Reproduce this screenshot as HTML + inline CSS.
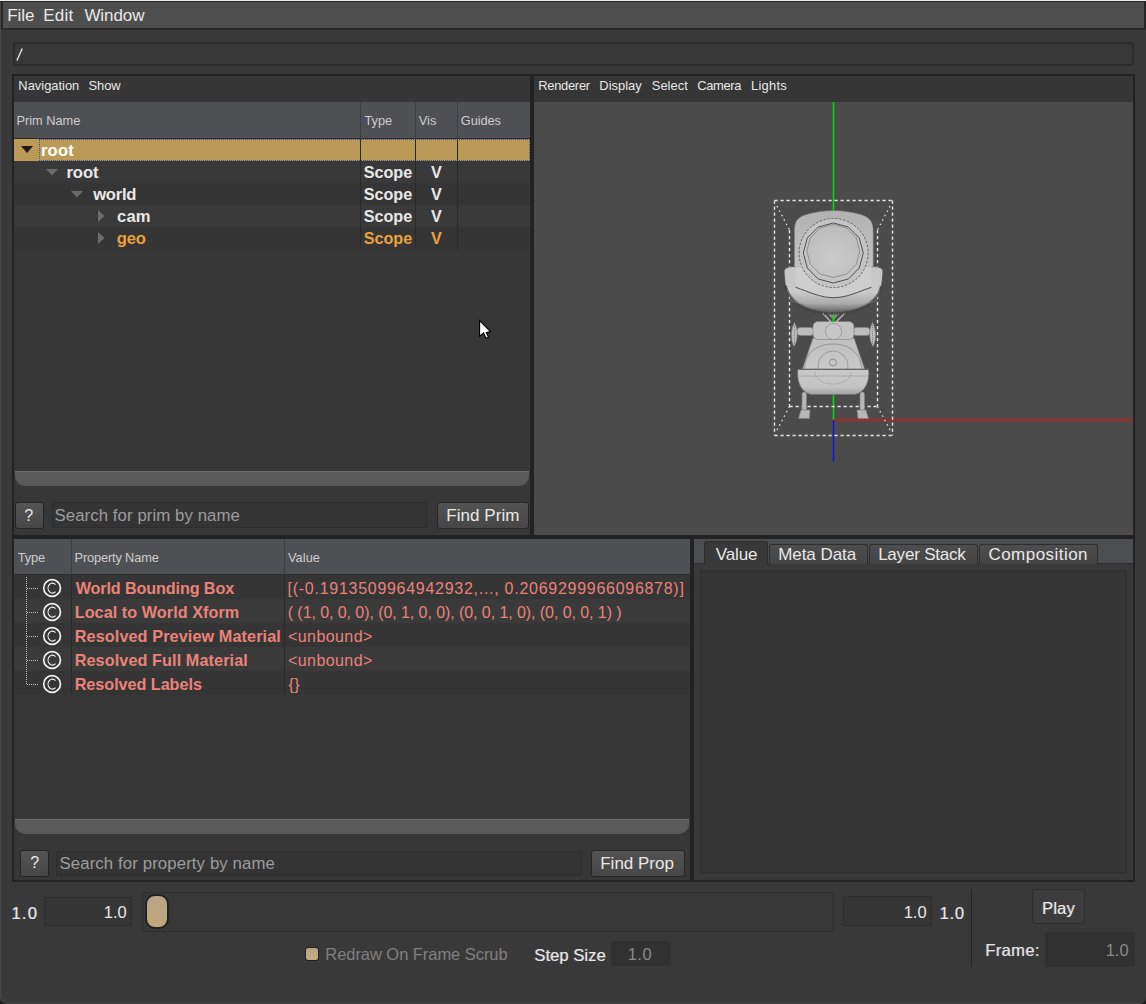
<!DOCTYPE html>
<html><head><meta charset="utf-8">
<style>
*{margin:0;padding:0;box-sizing:border-box}
html,body{width:1146px;height:1004px;overflow:hidden;background:#1e1e1e}
body{position:relative;font-family:"Liberation Sans",sans-serif;color:#e6e6e6}
.a{position:absolute}
.t{position:absolute;white-space:nowrap;line-height:1}
</style></head><body>
<!-- window bg with rounded bottom corners -->
<div class="a" style="left:0;top:0;width:1146px;height:1004px;background:#393939;border-radius:0 0 7px 7px;border-left:1px solid #474747;border-bottom:1px solid #444"></div>
<!-- window frame -->
<div class="a" style="left:0;top:0;width:1146px;height:1px;background:#ebebeb"></div>
<div class="a" style="left:0;top:1px;width:1146px;height:1px;background:#262626"></div>
<div class="a" style="left:1px;top:1px;width:2px;height:28px;background:#262626"></div>
<div class="a" style="left:1144px;top:1px;width:2px;height:28px;background:#262626"></div>
<!-- menubar -->
<div class="a" style="left:3px;top:2px;width:1141px;height:26px;background:#4e4e4e"></div>
<div class="a" style="left:1px;top:28px;width:1145px;height:2px;background:#2a2a2a"></div>

<!-- path field -->
<div class="a" style="left:13px;top:42px;width:1121px;height:24px;background:#383838;border:2px solid #2d2d2d;border-radius:3px"></div>

<svg class="a" style="left:0;top:0" width="40" height="70"><line x1="16.9" y1="60.6" x2="22.3" y2="48.4" stroke="#e6e6e6" stroke-width="1.35"/></svg>
<!-- LEFT PANEL frame -->
<div class="a" style="left:12px;top:74px;width:522px;height:465px;background:#222"></div>
<div class="a" style="left:14px;top:76px;width:516px;height:459px;background:#373737"></div>
<div class="a" style="left:14px;top:76px;width:516px;height:26px;background:#363636"></div>
<!-- tree header -->
<div class="a" style="left:14px;top:102px;width:516px;height:37px;background:#4f5054"></div>
<div class="a" style="left:14px;top:138px;width:516px;height:1px;background:#2c2c2c"></div>
<div class="a" style="left:360px;top:102px;width:1px;height:37px;background:#3d3e41"></div>
<div class="a" style="left:415px;top:102px;width:1px;height:37px;background:#3d3e41"></div>
<div class="a" style="left:457px;top:102px;width:1px;height:37px;background:#3d3e41"></div>
<!-- tree body -->
<div class="a" style="left:14px;top:139px;width:516px;height:332px;background:#373737"></div>
<div class="a" style="left:14px;top:139px;width:516px;height:22px;background:#bb9a57"></div>
<div class="a" style="left:39px;top:139px;width:491px;height:22px;border:1px dotted #3a55a0"></div>
<div class="a" style="left:14px;top:161px;width:516px;height:22px;background:#393939"></div>
<div class="a" style="left:14px;top:183px;width:516px;height:22px;background:#353535"></div>
<div class="a" style="left:14px;top:205px;width:516px;height:22px;background:#3a3a3a"></div>
<div class="a" style="left:14px;top:227px;width:516px;height:22px;background:#353535"></div>
<div class="a" style="left:360px;top:139px;width:1px;height:110px;background:#2a2a2a"></div>
<div class="a" style="left:415px;top:139px;width:1px;height:110px;background:#2a2a2a"></div>
<div class="a" style="left:457px;top:139px;width:1px;height:110px;background:#2a2a2a"></div>
<svg class="a" style="left:0;top:0" width="200" height="260">
 <polygon points="21,146 33,146 27,153" fill="#1c1c1c"/>
 <polygon points="46,169 58,169 52,175.5" fill="#6b6b6b"/>
 <polygon points="71,191 83,191 77,197.5" fill="#6b6b6b"/>
 <polygon points="98,210 104.5,216 98,222" fill="#6b6b6b"/>
 <polygon points="98,232 104.5,238 98,244" fill="#6b6b6b"/>
</svg>
<!-- tree scrollbar -->
<div class="a" style="left:15px;top:471px;width:514px;height:15px;background:#5a5a5a;border-top:1px solid #6e6e6e;border-radius:0 0 10px 10px"></div>
<!-- search row -->
<div class="a" style="left:15px;top:502px;width:29px;height:27px;background:linear-gradient(#545454,#474747);border:1px solid #242424;border-radius:3px"></div>
<div class="a" style="left:52px;top:502px;width:375px;height:26px;background:#343434;border:1px solid #2e2e2e"></div>
<div class="a" style="left:437px;top:502px;width:92px;height:27px;background:linear-gradient(#525252,#474747);border:1px solid #262626;border-radius:3px"></div>

<!-- VIEWPORT -->
<div class="a" style="left:532px;top:74px;width:603px;height:463px;background:#222"></div>
<div class="a" style="left:534px;top:76px;width:599px;height:26px;background:#363636"></div>
<div class="a" style="left:534px;top:102px;width:599px;height:433px;background:#4b4b4b"></div>
<svg class="a" style="left:534px;top:102px" width="599" height="433" viewBox="534 102 599 433">
 <defs>
  <linearGradient id="headTop" x1="0" y1="0" x2="0" y2="1">
   <stop offset="0" stop-color="#b2b2b2"/><stop offset="1" stop-color="#c2c2c2"/>
  </linearGradient>
  <linearGradient id="headSide" x1="0" y1="0" x2="1" y2="0">
   <stop offset="0" stop-color="#000" stop-opacity="0.10"/><stop offset="0.15" stop-color="#000" stop-opacity="0"/>
   <stop offset="0.85" stop-color="#000" stop-opacity="0"/><stop offset="1" stop-color="#000" stop-opacity="0.10"/>
  </linearGradient>
  <radialGradient id="face" cx="0.5" cy="0.65" r="0.6">
   <stop offset="0" stop-color="#cbcbcb"/><stop offset="1" stop-color="#bdbdbd"/>
  </radialGradient>
  <linearGradient id="bowl" x1="0" y1="0" x2="0" y2="1">
   <stop offset="0" stop-color="#c6c6c6"/><stop offset="0.55" stop-color="#c9c9c9"/><stop offset="0.8" stop-color="#aaaaaa"/><stop offset="1" stop-color="#5e5e5e"/>
  </linearGradient>
  <linearGradient id="belly" x1="0" y1="0" x2="0" y2="1">
   <stop offset="0" stop-color="#c0c0c0"/><stop offset="1" stop-color="#cacaca"/>
  </linearGradient>
  <linearGradient id="band" x1="0" y1="0" x2="0" y2="1">
   <stop offset="0" stop-color="#c9c9c9"/><stop offset="0.7" stop-color="#c4c4c4"/><stop offset="1" stop-color="#a2a2a2"/>
  </linearGradient>
 </defs>
 <!-- axes -->
 <line x1="833.5" y1="102" x2="833.5" y2="420" stroke="#00e000" stroke-width="1.5"/>
 <line x1="833" y1="420" x2="1133" y2="420" stroke="#d01818" stroke-width="1.6"/>
 <line x1="833.5" y1="420" x2="833.5" y2="462" stroke="#1414e6" stroke-width="1.5"/>
 <!-- bbox -->
 <g stroke="#e6e6e6" stroke-width="1.4" stroke-dasharray="3.2,2.8" fill="none">
  <line x1="774.5" y1="200.5" x2="892.5" y2="200.5"/>
  <line x1="774.5" y1="435.5" x2="892.5" y2="435.5"/>
  <line x1="774.5" y1="200.5" x2="774.5" y2="435.5"/>
  <line x1="892.5" y1="200.5" x2="892.5" y2="435.5"/>
  <line x1="789.5" y1="230" x2="789.5" y2="406.5"/>
  <line x1="877.5" y1="230" x2="877.5" y2="406.5"/>
  <line x1="789.5" y1="406.5" x2="877.5" y2="406.5"/>
 </g>
 <g stroke="#e6e6e6" stroke-width="1.3" stroke-dasharray="1.5,3.5" fill="none">
  <line x1="777" y1="206" x2="789.5" y2="230"/>
  <line x1="890" y1="206" x2="877.5" y2="230"/>
  <line x1="777" y1="430" x2="789.5" y2="406.5"/>
  <line x1="890" y1="430" x2="877.5" y2="406.5"/>
 </g>
 <!-- robot legs & feet -->
 <g fill="#b7b7b7" stroke="#7e7e7e" stroke-width="0.6">
  <rect x="802" y="392" width="4.5" height="19" rx="2"/>
  <rect x="860" y="392" width="4.5" height="19" rx="2"/>
  <path d="M801,410 L810,410 L809.5,418.5 L798.5,418.5 Z"/>
  <path d="M857,410 L866,410 L868.5,418.5 L858,418.5 Z"/>
 </g>
 <!-- arms / hands -->
 <g fill="#bdbdbd" stroke="#858585" stroke-width="0.6">
  <rect x="797" y="327.5" width="17" height="8" rx="3.5"/>
  <rect x="853" y="327.5" width="17" height="8" rx="3.5"/>
  <path d="M794.5,322.5 C790.5,330 790.5,340 794,346.5 C798,340 798.5,330 794.5,322.5 Z"/>
  <path d="M872.5,322.5 C876.5,330 876.5,340 873,346.5 C869,340 868.5,330 872.5,322.5 Z"/>
 </g>
 <g stroke="#6e6e6e" stroke-width="0.8" stroke-dasharray="1,1" fill="none">
  <path d="M794.5,325 L794.5,345"/><path d="M872.5,325 L872.5,345"/>
 </g>
 <!-- lower torso trapezoid -->
 <path d="M813,338 L854,338 L866,373 L801,373 Z" fill="#c1c1c1" stroke="#7e7e7e" stroke-width="0.6"/>
 <!-- belly dome -->
 <path d="M804.5,370 C804.5,352 818,344 833,344 C848,344 861.5,352 861.5,370 Z" fill="url(#belly)" stroke="#777" stroke-width="0.6"/>
 <circle cx="833" cy="366" r="15" fill="none" stroke="#8a8a8a" stroke-width="0.7"/>
 <circle cx="833" cy="362.5" r="3.5" fill="none" stroke="#808080" stroke-width="0.8"/>
 <!-- band / bowl -->
 <path d="M798,369 L868.5,369 C870,380 866,392 855,394.5 L811,394.5 C800,392 796.5,380 798,369 Z" fill="url(#band)" stroke="#6e6e6e" stroke-width="0.7"/>
 <line x1="798.5" y1="369.5" x2="868" y2="369.5" stroke="#5c5c5c" stroke-width="0.9"/>
 <line x1="799" y1="376" x2="868" y2="376" stroke="#979797" stroke-width="0.6"/>
 <path d="M815,372 C815,388 851,388 851,372" fill="none" stroke="#8c8c8c" stroke-width="0.7" stroke-dasharray="1.2,0.8"/>
 <!-- torso shoulder piece -->
 <rect x="813" y="321.5" width="41" height="18" rx="5" fill="#c3c3c3" stroke="#7e7e7e" stroke-width="0.6"/>
 <circle cx="833.5" cy="331.5" r="8" fill="#c6c6c6" stroke="#6e6e6e" stroke-width="0.8" stroke-dasharray="1.2,0.8"/>
 <!-- neck struts -->
 <path d="M820.8,311 L831,322 M847,311 L836,322" stroke="#b5b5b5" stroke-width="1.5"/>
 <path d="M826,312 L833.5,320 L841,312 Z" fill="#8a8a8a"/>
 <line x1="833.5" y1="312" x2="833.5" y2="322" stroke="#00e000" stroke-width="1.5"/>
 <!-- head lower bowl -->
 <path d="M784,272 C784,268 788,266.5 794,266.5 L873,266.5 C879,266.5 883,268 883,272 L882,283 C879,302 860,313 833.5,313 C807,313 788,302 785,283 Z" fill="url(#bowl)" stroke="#505050" stroke-width="0.9"/>
 <path d="M785.5,286 C789,303 808,313.5 833.5,313.5 C859,313.5 878,303 881.5,286" fill="none" stroke="#3e3e3e" stroke-width="3.2" stroke-dasharray="1.6,0.9" opacity="0.85"/>
 <path d="M787,290 C792,304 810,311 833.5,311 C857,311 875,304 880,290" fill="none" stroke="#6a6a6a" stroke-width="1.2" opacity="0.8"/>
 <!-- head upper -->
 <path d="M794.3,267 L794.3,232 C794.3,222 796.5,217.5 806,214.5 C815,212 825,210.5 833.5,210.5 C842,210.5 852,212 861,214.5 C870.5,217.5 873.3,222 873.3,232 L873.3,267 Z" fill="url(#headTop)" stroke="#6a6a6a" stroke-width="0.6"/>
 <!-- lower face plate -->
 <path d="M795.5,266.5 L871.5,266.5 L871.5,287.2 C858,292 846,297.7 833.5,297.7 C821,297.7 809,292 795.5,287.2 Z" fill="#cecece"/>
 <path d="M795.5,287.2 C809,292 821,297.7 833.5,297.7 C846,297.7 858,292 871.5,287.2" fill="none" stroke="#4e4e4e" stroke-width="1"/>
 <path d="M790,300 C805,309 862,309 877,300" fill="none" stroke="#8e8e8e" stroke-width="0.6"/>
 <!-- face rings -->
 <circle cx="833.6" cy="253" r="34.5" fill="#c4c4c4" stroke="#5e5e5e" stroke-width="0.9" stroke-dasharray="2.5,1.5"/>
 <polygon points="833.3,223 848.3,227 859.3,238 863.3,253 859.3,268 848.3,279 833.3,283 818.3,279 807.3,268 803.3,253 807.3,238 818.3,227" fill="none" stroke="#505050" stroke-width="1"/>
 <polygon points="833.3,224.5 846.6,228 856.3,237.8 859.8,251 856.3,264.3 846.6,274 833.3,277.5 820,274 810.3,264.3 806.8,251 810.3,237.8 820,228" fill="url(#face)" stroke="#7a7a7a" stroke-width="0.7"/>
</svg>


<!-- PROPS PANEL -->
<div class="a" style="left:12px;top:535px;width:1123px;height:4px;background:#222"></div>
<div class="a" style="left:12px;top:537px;width:682px;height:345px;background:#222"></div>
<div class="a" style="left:14px;top:539px;width:676px;height:341px;background:#373737"></div>
<div class="a" style="left:14px;top:539px;width:676px;height:36px;background:#4f5054"></div>
<div class="a" style="left:14px;top:574px;width:676px;height:1px;background:#2c2c2c"></div>
<div class="a" style="left:71px;top:539px;width:1px;height:36px;background:#3d3e41"></div>
<div class="a" style="left:284px;top:539px;width:1px;height:36px;background:#3d3e41"></div>
<div class="a" style="left:14px;top:575px;width:676px;height:244px;background:#373737"></div>
<div class="a" style="left:14px;top:575px;width:676px;height:24px;background:#353535"></div>
<div class="a" style="left:14px;top:599px;width:676px;height:24px;background:#3a3a3a"></div>
<div class="a" style="left:14px;top:623px;width:676px;height:24px;background:#353535"></div>
<div class="a" style="left:14px;top:647px;width:676px;height:24px;background:#3a3a3a"></div>
<div class="a" style="left:14px;top:671px;width:676px;height:24px;background:#353535"></div>
<div class="a" style="left:71px;top:575px;width:1px;height:120px;background:#2a2a2a"></div>
<div class="a" style="left:284px;top:575px;width:1px;height:120px;background:#2a2a2a"></div>
<svg class="a" style="left:0;top:560px" width="80" height="140">
 <g stroke="#bdbdbd" stroke-width="1" stroke-dasharray="1,1" fill="none">
  <line x1="26.5" y1="17" x2="26.5" y2="124"/>
  <line x1="27" y1="28.5" x2="38" y2="28.5"/>
  <line x1="27" y1="52.5" x2="38" y2="52.5"/>
  <line x1="27" y1="76.5" x2="38" y2="76.5"/>
  <line x1="27" y1="100.5" x2="38" y2="100.5"/>
  <line x1="27" y1="124.5" x2="38" y2="124.5"/>
 </g>
 <g stroke="#f2f2f2" fill="none">
  <circle cx="52.1" cy="28.0" r="8.4" stroke-width="1.7"/>
  <circle cx="52.1" cy="52.0" r="8.4" stroke-width="1.7"/>
  <circle cx="52.1" cy="76.0" r="8.4" stroke-width="1.7"/>
  <circle cx="52.1" cy="100.0" r="8.4" stroke-width="1.7"/>
  <circle cx="52.1" cy="124.0" r="8.4" stroke-width="1.7"/>
 </g>
 <g stroke="#f0f0f0" fill="none" stroke-width="1.25">
  <path d="M55.50,24.65 A4.3,5.0 0 1 0 55.50,31.55"/>
  <path d="M55.50,48.65 A4.3,5.0 0 1 0 55.50,55.55"/>
  <path d="M55.50,72.65 A4.3,5.0 0 1 0 55.50,79.55"/>
  <path d="M55.50,96.65 A4.3,5.0 0 1 0 55.50,103.55"/>
  <path d="M55.50,120.65 A4.3,5.0 0 1 0 55.50,127.55"/>
 </g>
</svg>
<!-- prop scrollbar -->
<div class="a" style="left:15px;top:819px;width:674px;height:15px;background:#5a5a5a;border-top:1px solid #6e6e6e;border-radius:0 0 10px 10px"></div>
<div class="a" style="left:20px;top:850px;width:29px;height:27px;background:linear-gradient(#545454,#474747);border:1px solid #242424;border-radius:3px"></div>
<div class="a" style="left:56px;top:851px;width:526px;height:25px;background:#343434;border:1px solid #2e2e2e"></div>
<div class="a" style="left:591px;top:850px;width:94px;height:27px;background:linear-gradient(#525252,#474747);border:1px solid #262626;border-radius:3px"></div>

<!-- RIGHT PANEL -->
<div class="a" style="left:692px;top:537px;width:443px;height:345px;background:#222"></div>
<div class="a" style="left:694px;top:539px;width:439px;height:341px;background:#393939"></div>
<div class="a" style="left:694px;top:539px;width:439px;height:25px;background:#4d4e52"></div>
<div class="a" style="left:694px;top:563px;width:439px;height:1px;background:#2e2e2e"></div>
<div class="a" style="left:769px;top:544px;width:99px;height:20px;background:linear-gradient(#4d4d4d,#444);border:1px solid #2e2e2e;border-bottom:none;border-radius:3px 3px 0 0"></div>
<div class="a" style="left:869px;top:544px;width:109px;height:20px;background:linear-gradient(#4d4d4d,#444);border:1px solid #2e2e2e;border-bottom:none;border-radius:3px 3px 0 0"></div>
<div class="a" style="left:979px;top:544px;width:119px;height:20px;background:linear-gradient(#4d4d4d,#444);border:1px solid #2e2e2e;border-bottom:none;border-radius:3px 3px 0 0"></div>
<div class="a" style="left:704px;top:541px;width:64px;height:24px;background:#393939;border:1px solid #2e2e2e;border-bottom:none;border-radius:3px 3px 0 0"></div>
<div class="a" style="left:700px;top:570px;width:427px;height:304px;background:#363636;border:2px solid #313131"></div>

<!-- BOTTOM -->
<div class="a" style="left:12px;top:880px;width:1123px;height:2px;background:#222"></div>
<!-- timeline -->
<div class="a" style="left:44px;top:897px;width:88px;height:29px;background:#363636;border:1px solid #2e2e2e;border-radius:2px"></div>
<div class="a" style="left:142px;top:892px;width:692px;height:40px;background:#383838;border:1px solid #2e2e2e"></div>
<div class="a" style="left:145px;top:894px;width:24px;height:35px;background:linear-gradient(#b6a487,#c1a87b);border:2px solid #222;border-radius:10px"></div>
<div class="a" style="left:843px;top:896px;width:89px;height:30px;background:#363636;border:1px solid #2e2e2e;border-radius:2px"></div>
<div class="a" style="left:971px;top:889px;width:1px;height:78px;background:#252525"></div>
<div class="a" style="left:1032px;top:889px;width:53px;height:35px;background:#3c3c3c;border:1px solid #2e2e2e;border-radius:3px"></div>
<div class="a" style="left:1045px;top:932px;width:90px;height:35px;background:#313131;border-radius:2px"></div>
<div class="a" style="left:611px;top:941px;width:60px;height:25px;background:#313131;border-radius:2px"></div>
<div class="a" style="left:305px;top:947px;width:14px;height:14px;background:linear-gradient(#b7a583,#c3ab7f);border:1.5px solid #1e1e1e;border-radius:3px"></div>

<div class="t" style="left:7.14px;top:7.00px;font-size:17px;color:#e8e8e8;letter-spacing:-0.039px">File</div>
<div class="t" style="left:43.14px;top:7.00px;font-size:17px;color:#e8e8e8;letter-spacing:0.277px">Edit</div>
<div class="t" style="left:84.40px;top:7.00px;font-size:17px;color:#e8e8e8;letter-spacing:-0.079px">Window</div>
<div class="t" style="left:18.37px;top:80.00px;font-size:12.9px;color:#e8e8e8">Navigation</div>
<div class="t" style="left:88.48px;top:80.00px;font-size:12.9px;color:#e8e8e8;letter-spacing:-0.018px">Show</div>
<div class="t" style="left:538.17px;top:80.00px;font-size:12.9px;color:#e8e8e8;letter-spacing:-0.254px">Renderer</div>
<div class="t" style="left:599.37px;top:80.00px;font-size:12.9px;color:#e8e8e8">Display</div>
<div class="t" style="left:651.78px;top:80.00px;font-size:12.9px;color:#e8e8e8;letter-spacing:0.027px">Select</div>
<div class="t" style="left:697.36px;top:80.00px;font-size:12.9px;color:#e8e8e8;letter-spacing:-0.377px">Camera</div>
<div class="t" style="left:750.97px;top:80.00px;font-size:12.9px;color:#e8e8e8;letter-spacing:0.279px">Lights</div>
<div class="t" style="left:16.48px;top:115.00px;font-size:12.8px;color:#cdcdcd;letter-spacing:-0.027px">Prim Name</div>
<div class="t" style="left:364.44px;top:115.00px;font-size:12.8px;color:#cdcdcd">Type</div>
<div class="t" style="left:418.80px;top:115.00px;font-size:12.8px;color:#cdcdcd">Vis</div>
<div class="t" style="left:460.86px;top:115.00px;font-size:12.8px;color:#cdcdcd;letter-spacing:-0.106px">Guides</div>
<div class="t" style="left:41.00px;top:143.00px;font-size:16.6px;color:#ffffff;font-weight:bold;letter-spacing:0.159px">root</div>
<div class="t" style="left:66.40px;top:165.00px;font-size:16.6px;color:#e8e8e8;font-weight:bold">root</div>
<div class="t" style="left:93.17px;top:187.00px;font-size:16.6px;color:#e8e8e8;font-weight:bold;letter-spacing:-0.255px">world</div>
<div class="t" style="left:117.00px;top:209.00px;font-size:16.6px;color:#e8e8e8;font-weight:bold;letter-spacing:0.178px">cam</div>
<div class="t" style="left:116.84px;top:231.00px;font-size:16.6px;color:#e9a23b;font-weight:bold;letter-spacing:-0.218px">geo</div>
<div class="t" style="left:363.68px;top:164.00px;font-size:16.2px;color:#e8e8e8;font-weight:bold;letter-spacing:-0.017px">Scope</div>
<div class="t" style="left:431.00px;top:164.00px;font-size:16.2px;color:#e8e8e8;font-weight:bold">V</div>
<div class="t" style="left:363.68px;top:186.00px;font-size:16.2px;color:#e8e8e8;font-weight:bold;letter-spacing:-0.017px">Scope</div>
<div class="t" style="left:431.00px;top:186.00px;font-size:16.2px;color:#e8e8e8;font-weight:bold">V</div>
<div class="t" style="left:363.68px;top:208.00px;font-size:16.2px;color:#e8e8e8;font-weight:bold;letter-spacing:-0.017px">Scope</div>
<div class="t" style="left:431.00px;top:208.00px;font-size:16.2px;color:#e8e8e8;font-weight:bold">V</div>
<div class="t" style="left:363.68px;top:230.00px;font-size:16.2px;color:#e9a23b;font-weight:bold;letter-spacing:-0.017px">Scope</div>
<div class="t" style="left:431.00px;top:230.00px;font-size:16.2px;color:#e9a23b;font-weight:bold">V</div>
<div class="t" style="left:24.36px;top:508.00px;font-size:16px;color:#e8e8e8">?</div>
<div class="t" style="left:54.53px;top:508.00px;font-size:16.8px;color:#9c9c9c;letter-spacing:0.075px">Search for prim by name</div>
<div class="t" style="left:446.34px;top:507.00px;font-size:17px;color:#e8e8e8;letter-spacing:0.050px">Find Prim</div>
<div class="t" style="left:17.84px;top:552.00px;font-size:12.8px;color:#cdcdcd;letter-spacing:-0.177px">Type</div>
<div class="t" style="left:74.58px;top:552.00px;font-size:12.8px;color:#cdcdcd;letter-spacing:-0.157px">Property Name</div>
<div class="t" style="left:287.90px;top:552.00px;font-size:12.8px;color:#cdcdcd;letter-spacing:0.069px">Value</div>
<div class="t" style="left:75.70px;top:580.00px;font-size:16.2px;color:#e9837a;font-weight:bold;letter-spacing:-0.128px">World Bounding Box</div>
<div class="t" style="left:74.73px;top:604.00px;font-size:16.2px;color:#e9837a;font-weight:bold;letter-spacing:0.059px">Local to World Xform</div>
<div class="t" style="left:74.73px;top:628.00px;font-size:16.2px;color:#e9837a;font-weight:bold;letter-spacing:0.116px">Resolved Preview Material</div>
<div class="t" style="left:74.73px;top:652.00px;font-size:16.2px;color:#e9837a;font-weight:bold;letter-spacing:0.101px">Resolved Full Material</div>
<div class="t" style="left:74.73px;top:676.00px;font-size:16.2px;color:#e9837a;font-weight:bold;letter-spacing:-0.042px">Resolved Labels</div>
<div class="t" style="left:287.58px;top:581.00px;font-size:16px;color:#e9837a;letter-spacing:0.724px">[(-0.1913509964942932,..., 0.2069299966096878)]</div>
<div class="t" style="left:287.74px;top:605.00px;font-size:16px;color:#e9837a;letter-spacing:-0.070px">( (1, 0, 0, 0), (0, 1, 0, 0), (0, 0, 1, 0), (0, 0, 0, 1) )</div>
<div class="t" style="left:288.06px;top:629.00px;font-size:16px;color:#e9837a;letter-spacing:0.408px">&lt;unbound&gt;</div>
<div class="t" style="left:288.06px;top:653.00px;font-size:16px;color:#e9837a;letter-spacing:0.408px">&lt;unbound&gt;</div>
<div class="t" style="left:288.54px;top:677.00px;font-size:16px;color:#e9837a;letter-spacing:0.496px">{}</div>
<div class="t" style="left:30.26px;top:855.00px;font-size:16px;color:#e8e8e8">?</div>
<div class="t" style="left:59.53px;top:856.00px;font-size:16.8px;color:#9c9c9c;letter-spacing:0.103px">Search for property by name</div>
<div class="t" style="left:600.24px;top:855.00px;font-size:17px;color:#e8e8e8">Find Prop</div>
<div class="t" style="left:715.80px;top:546.00px;font-size:17px;color:#e8e8e8;letter-spacing:-0.151px">Value</div>
<div class="t" style="left:778.14px;top:546.00px;font-size:17px;color:#e8e8e8;letter-spacing:-0.041px">Meta Data</div>
<div class="t" style="left:878.14px;top:546.00px;font-size:17px;color:#e8e8e8;letter-spacing:-0.207px">Layer Stack</div>
<div class="t" style="left:988.45px;top:546.00px;font-size:17px;color:#e8e8e8;letter-spacing:0.462px">Composition</div>
<div class="t" style="left:11.65px;top:905.00px;font-size:16.5px;color:#e8e8e8;letter-spacing:1.257px;text-shadow:-0.7px -0.5px 0 #8a8a95">1.0</div>
<div class="t" style="left:103.86px;top:904.00px;font-size:16.5px;color:#e8e8e8">1.0</div>
<div class="t" style="left:903.66px;top:904.00px;font-size:16.5px;color:#e8e8e8">1.0</div>
<div class="t" style="left:939.85px;top:905.00px;font-size:16.5px;color:#e8e8e8;letter-spacing:0.757px;text-shadow:-0.7px -0.5px 0 #8a8a95">1.0</div>
<div class="t" style="left:325.28px;top:946.00px;font-size:16.5px;color:#808080;letter-spacing:-0.049px">Redraw On Frame Scrub</div>
<div class="t" style="left:534.54px;top:947.00px;font-size:16.5px;color:#e6e6e6;letter-spacing:0.092px;text-shadow:-0.7px -0.5px 0 #8a8a95">Step Size</div>
<div class="t" style="left:627.64px;top:946.00px;font-size:16.5px;color:#8a8a8a;letter-spacing:0.507px">1.0</div>
<div class="t" style="left:1042.28px;top:900.00px;font-size:16.5px;color:#e8e8e8;letter-spacing:0.174px;text-shadow:-0.7px -0.5px 0 #8a8a95">Play</div>
<div class="t" style="left:985.48px;top:942.00px;font-size:16.5px;color:#e6e6e6;letter-spacing:0.383px;text-shadow:-0.7px -0.5px 0 #8a8a95">Frame:</div>
<div class="t" style="left:1105.66px;top:942.00px;font-size:16.5px;color:#8a8a8a">1.0</div>

<!-- cursor -->
<svg class="a" style="left:478px;top:319px" width="16" height="22">
 <path d="M1.6,1.6 L1.6,17.4 L5.6,14 L8,19.3 L10.5,18.2 L8.3,13.6 L12.4,12.6 Z" fill="#fff" stroke="#000" stroke-width="1.1" stroke-linejoin="miter"/>
</svg>
</body></html>
